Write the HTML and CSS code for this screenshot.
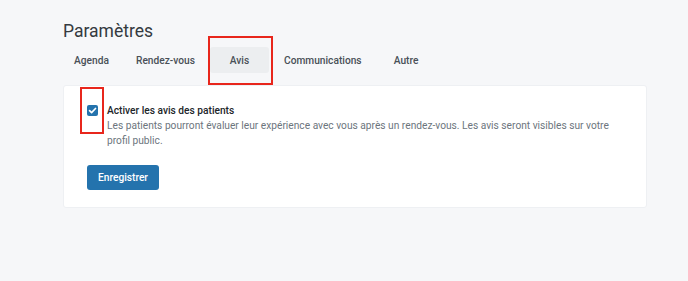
FILE: index.html
```html
<!DOCTYPE html>
<html lang="fr">
<head>
    <meta charset="UTF-8">
    <meta name="viewport" content="width=device-width, initial-scale=1.0">
    <title>Paramètres</title>
    <link rel="stylesheet" href="styles.css">
</head>
<body>
    <div class="container">
        <h1>Paramètres</h1>

        <div class="tabs">
            <button class="tab-btn">Agenda</button>
            <button class="tab-btn">Rendez-vous</button>
            <button class="tab-btn active">Avis<span class="highlight highlight-tab"></span></button>
            <button class="tab-btn">Communications</button>
            <button class="tab-btn">Autre</button>
        </div>

        <div class="card">
            <div class="option">
                <span class="checkbox">
                    <svg viewBox="0 0 12 12" width="11" height="11">
                        <path d="M2.8 6.2 L5 8.3 L9.3 3.8" fill="none" stroke="#fff" stroke-width="1.8" stroke-linecap="round" stroke-linejoin="round"/>
                    </svg>
                    <span class="highlight highlight-check"></span>
                </span>
                <div class="option-text">
                    <div class="option-title">Activer les avis des patients</div>
                    <div class="option-desc">Les patients pourront évaluer leur expérience avec vous après un rendez-vous. Les avis seront visibles sur votre profil public.</div>
                </div>
            </div>
            <button class="save-btn">Enregistrer</button>
        </div>
    </div>
</body>
</html>
```

FILE: styles.css
```css
* {
    box-sizing: border-box;
}

body {
    font-family: 'Roboto', 'Liberation Sans', sans-serif;
    margin: 0;
    padding: 0;
    background: #f6f7f9;
    color: #333;
}

.container {
    padding: 20px 41px 0 63px;
}

h1 {
    margin: 0;
    font-size: 17.5px;
    line-height: 22px;
    font-weight: 400;
    color: #343a40;
}

.tabs {
    display: flex;
    gap: 3px;
    margin: 5px 0 0 -1px;
}

.tab-btn {
    position: relative;
    min-width: 59px;
    height: 26px;
    padding: 0 12px;
    border: none;
    border-radius: 3px;
    background: transparent;
    font-family: inherit;
    font-size: 10.2px;
    font-weight: 500;
    color: #495057;
    cursor: pointer;
}

    .tab-btn.active {
        background: #eceef0;
    }

.highlight {
    position: absolute;
    border: 2px solid #e8261c;
    pointer-events: none;
}

.highlight-tab {
    left: -2px;
    top: -11px;
    width: 65px;
    height: 49px;
}

.card {
    margin-top: 12px;
    padding: 17px 23px 17px 23px;
    background: #fff;
    border: 1px solid #eef0f3;
    border-radius: 3px;
}

.option {
    display: flex;
    gap: 9px;
    align-items: flex-start;
}

.checkbox {
    position: relative;
    flex: none;
    width: 11px;
    height: 11px;
    margin-top: 1.5px;
    border-radius: 2px;
    background: #2473ad;
    display: flex;
}

.highlight-check {
    left: -7px;
    top: -17.5px;
    width: 24px;
    height: 47px;
}

.option-title {
    font-size: 10.2px;
    line-height: 15px;
    font-weight: 500;
    color: #212529;
}

.option-desc {
    font-size: 10.2px;
    line-height: 15px;
    color: #6c757d;
}

.save-btn {
    margin-top: 17px;
    height: 25px;
    padding: 0 11px;
    border: none;
    border-radius: 3px;
    background: #2473ad;
    color: #fff;
    font-family: inherit;
    font-size: 10.2px;
    font-weight: 500;
    cursor: pointer;
}
```
